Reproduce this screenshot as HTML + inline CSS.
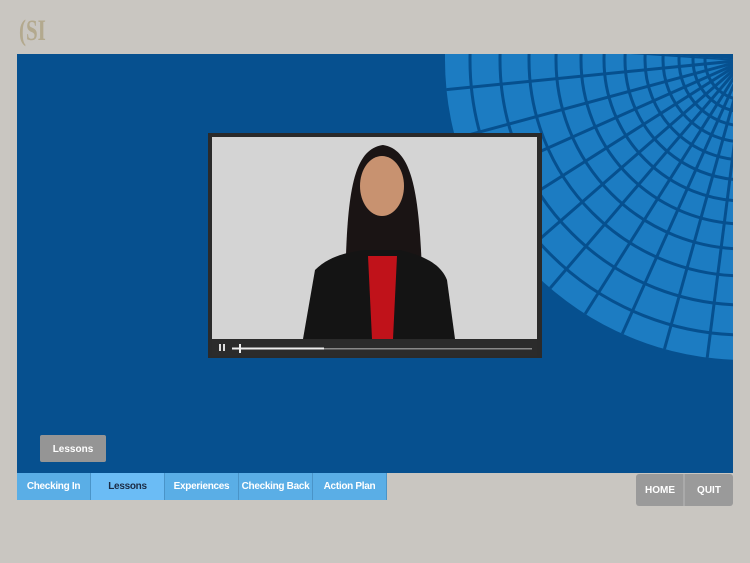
<!DOCTYPE html>
<html><head><style>
body{margin:0;width:750px;height:563px;background:#c9c6c1;overflow:hidden;font-family:"Liberation Sans",sans-serif;position:relative}
.tab{position:absolute;top:473px;height:27px;background:#5aaee6;color:#fff;font-size:10px;font-weight:bold;text-align:center;line-height:27px;box-sizing:border-box;border-right:1px solid #4a94c8;white-space:nowrap;letter-spacing:-0.3px}
</style></head><body>
<svg width="750" height="563" style="position:absolute;left:0;top:0">
<text x="19" y="40" font-family="Liberation Serif" font-size="30" font-weight="bold" fill="#b3a98e" transform="scale(0.7,1)" transform-origin="19 40">(SI</text>
<rect x="17" y="54" width="716" height="419" fill="#06508f"/>
<defs><clipPath id="c"><rect x="17" y="54" width="716" height="419"/></clipPath>
<clipPath id="r"><path d="M745 60 L445 40 L445 60 A300 300 0 0 0 745 360 Z"/></clipPath></defs>
<g clip-path="url(#c)">
<g clip-path="url(#r)">
<circle cx="745" cy="60" r="305" fill="#1c7cc2"/>
<g fill="none" stroke="#06508f" stroke-width="3">
<circle cx="745" cy="60" r="275"/><circle cx="745" cy="60" r="245"/><circle cx="745" cy="60" r="216"/><circle cx="745" cy="60" r="189"/><circle cx="745" cy="60" r="164"/><circle cx="745" cy="60" r="141"/><circle cx="745" cy="60" r="120"/><circle cx="745" cy="60" r="100"/><circle cx="745" cy="60" r="82"/><circle cx="745" cy="60" r="66"/><circle cx="745" cy="60" r="52"/><circle cx="745" cy="60" r="40"/>
</g>
<g stroke="#06508f" stroke-width="3">
<line x1="745" y1="60" x2="440" y2="40"/><line x1="745" y1="60" x2="442" y2="90"/><line x1="745" y1="60" x2="450" y2="140"/><line x1="745" y1="60" x2="465" y2="185"/><line x1="745" y1="60" x2="485" y2="225"/><line x1="745" y1="60" x2="510" y2="265"/><line x1="745" y1="60" x2="540" y2="300"/><line x1="745" y1="60" x2="575" y2="330"/><line x1="745" y1="60" x2="615" y2="350"/><line x1="745" y1="60" x2="660" y2="365"/><line x1="745" y1="60" x2="705" y2="375"/>
</g></g></g>
<rect x="208" y="133" width="334" height="225" fill="#2a2a2a"/>
<rect x="212" y="137" width="325" height="202" fill="#d4d4d4"/>
<path d="M345 330 C345 200 350 150 383 145 C415 150 420 200 423 300 Z" fill="#1a1414"/>
<ellipse cx="382" cy="186" rx="22" ry="30" fill="#c89270"/>
<path d="M303 339 L315 270 C330 255 350 252 365 250 L400 250 C420 255 440 262 447 280 L455 339 Z" fill="#141414"/>
<path d="M368 256 L397 256 L393 339 L372 339 Z" fill="#c0121a"/>
<rect x="212" y="340" width="325" height="16" fill="#2b2b2b"/>
<rect x="219" y="344" width="2" height="7" fill="#ddd"/><rect x="223" y="344" width="2" height="7" fill="#ddd"/>
<rect x="232" y="348" width="300" height="1.5" fill="#888"/>
<rect x="232" y="347.5" width="92" height="2" fill="#eee"/>
<rect x="239" y="344" width="2" height="9" fill="#eee"/>
<rect x="40" y="435" width="66" height="27" rx="2" fill="#959595"/>
<text x="73" y="452" font-size="10" font-weight="bold" fill="#fff" text-anchor="middle">Lessons</text>
<rect x="636" y="474" width="97" height="32" rx="3" fill="#9a9a9a"/>
<line x1="684" y1="474" x2="684" y2="506" stroke="#bbb"/>
<text x="660" y="493" font-size="10" font-weight="bold" fill="#fff" text-anchor="middle">HOME</text>
<text x="709" y="493" font-size="10" font-weight="bold" fill="#fff" text-anchor="middle">QUIT</text>
</svg>
<div class="tab" style="left:17px;width:74px">Checking In</div>
<div class="tab" style="left:91px;width:74px;background:#6bbcf5;color:#1b2b44">Lessons</div>
<div class="tab" style="left:165px;width:74px">Experiences</div>
<div class="tab" style="left:239px;width:74px">Checking Back</div>
<div class="tab" style="left:313px;width:74px">Action Plan</div>
</body></html>
